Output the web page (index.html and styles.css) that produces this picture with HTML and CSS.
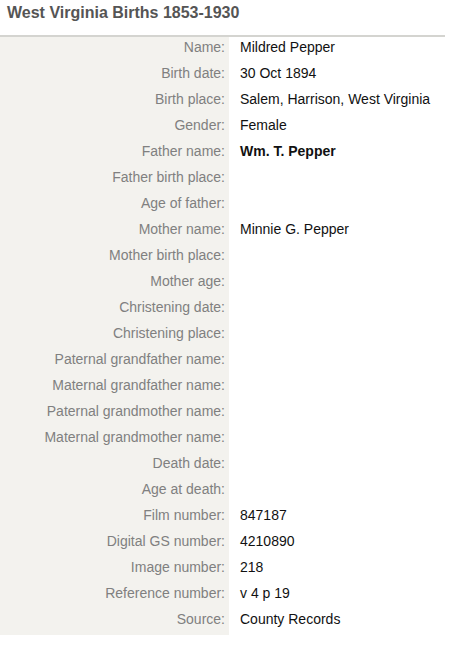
FILE: index.html
```html
<!DOCTYPE html>
<html>
<head>
<meta charset="utf-8">
<link rel="stylesheet" href="styles.css">
</head>
<body>
<div class="page">
  <h1 class="title">West Virginia Births 1853-1930</h1>
  <div class="record">
    <div class="row"><div class="label">Name:</div><div class="value">Mildred Pepper</div></div>
    <div class="row"><div class="label">Birth date:</div><div class="value">30 Oct 1894</div></div>
    <div class="row"><div class="label">Birth place:</div><div class="value">Salem, Harrison, West Virginia</div></div>
    <div class="row"><div class="label">Gender:</div><div class="value">Female</div></div>
    <div class="row"><div class="label">Father name:</div><div class="value strong">Wm. T. Pepper</div></div>
    <div class="row"><div class="label">Father birth place:</div><div class="value"></div></div>
    <div class="row"><div class="label">Age of father:</div><div class="value"></div></div>
    <div class="row"><div class="label">Mother name:</div><div class="value">Minnie G. Pepper</div></div>
    <div class="row"><div class="label">Mother birth place:</div><div class="value"></div></div>
    <div class="row"><div class="label">Mother age:</div><div class="value"></div></div>
    <div class="row"><div class="label">Christening date:</div><div class="value"></div></div>
    <div class="row"><div class="label">Christening place:</div><div class="value"></div></div>
    <div class="row"><div class="label">Paternal grandfather name:</div><div class="value"></div></div>
    <div class="row"><div class="label">Maternal grandfather name:</div><div class="value"></div></div>
    <div class="row"><div class="label">Paternal grandmother name:</div><div class="value"></div></div>
    <div class="row"><div class="label">Maternal grandmother name:</div><div class="value"></div></div>
    <div class="row"><div class="label">Death date:</div><div class="value"></div></div>
    <div class="row"><div class="label">Age at death:</div><div class="value"></div></div>
    <div class="row"><div class="label">Film number:</div><div class="value">847187</div></div>
    <div class="row"><div class="label">Digital GS number:</div><div class="value">4210890</div></div>
    <div class="row"><div class="label">Image number:</div><div class="value">218</div></div>
    <div class="row"><div class="label">Reference number:</div><div class="value">v 4 p 19</div></div>
    <div class="row"><div class="label">Source:</div><div class="value">County Records</div></div>
  </div>
</div>
</body>
</html>
```
FILE: styles.css
```css
html, body {
  margin: 0;
  padding: 0;
  background: #ffffff;
}
body {
  font-family: "Liberation Sans", Arial, sans-serif;
}
.page {
  width: 445px;
}
.title {
  margin: 0;
  padding: 3px 0 0 7px;
  height: 37px;
  box-sizing: border-box;
  font-size: 16px;
  font-weight: bold;
  color: #555555;
  border-bottom: 2px solid #d4d4d0;
  line-height: 19px;
}
.record {
  display: grid;
  grid-template-columns: 229px 1fr;
  grid-auto-rows: 26px;
  background: linear-gradient(to right, #f3f2ee 229px, #ffffff 229px);
}
.row {
  display: contents;
}
.label {
  text-align: right;
  padding-right: 4px;
  color: #808080;
  font-size: 14px;
  line-height: 21px;
}
.value {
  padding-left: 11px;
  color: #111111;
  font-size: 14px;
  line-height: 21px;
}
.value.strong {
  font-weight: bold;
}
```
